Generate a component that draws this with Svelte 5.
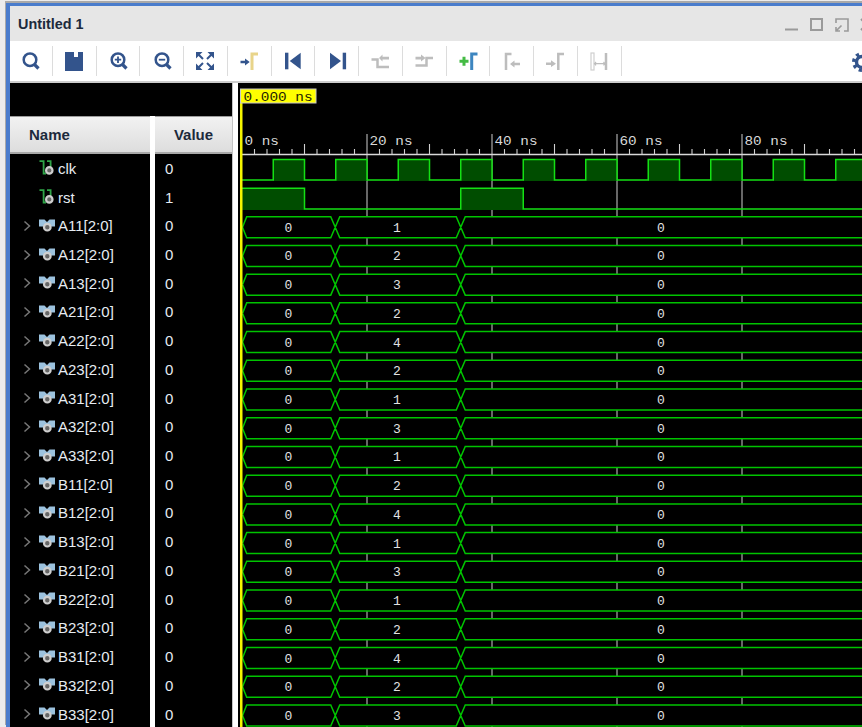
<script>
  const names = ['A11','A12','A13','A21','A22','A23','A31','A32','A33','B11','B12','B13','B21','B22','B23','B31','B32','B33'];
  const mids = [1,2,3,2,4,2,1,3,1,2,4,1,3,1,2,4,2,3];
  const signals = [
    { name: 'clk', value: 0, scalar: true },
    { name: 'rst', value: 1, scalar: true },
    ...names.map((n) => ({ name: n + '[2:0]', value: 0, scalar: false }))
  ];

  const pitch = 28.72;
  const nsX = (ns) => 242 + ns * 6.25;

  // ruler ticks, every 2ns
  const ticks = [];
  for (let ns = 2; ns <= 104; ns += 2) {
    if (ns % 20) ticks.push({ x: nsX(ns), big: ns % 10 === 0 });
  }
  const labels = [0, 20, 40, 60, 80];
  const grid = [20, 40, 60, 80];

  function scalarPath(edges, hi, lo, start) {
    // edges are toggle times in ns
    let level = start;
    let d = `M${nsX(0)},${level ? hi : lo}`;
    for (const e of edges) {
      d += `H${nsX(e)}`;
      level = !level;
      d += `V${level ? hi : lo}`;
    }
    return d + 'H880';
  }
  function highBlocks(edges, start) {
    const out = [];
    let level = start;
    let from = 0;
    for (const e of [...edges, 104]) {
      if (level) out.push([nsX(from), nsX(e)]);
      level = !level;
      from = e;
    }
    return out;
  }

  const clkEdges = [];
  for (let ns = 5; ns < 104; ns += 5) clkEdges.push(ns);
  const rstEdges = [10, 35, 45];
  const clkPath = scalarPath(clkEdges, 159.6, 180, false);
  const rstPath = scalarPath(rstEdges, 188.3, 209, true);
  const clkHigh = highBlocks(clkEdges, false);
  const rstHigh = highBlocks(rstEdges, true);

  const buses = mids.map((m, i) => ({ mid: m, y: 227.2 + i * pitch }));
  const a = nsX(15) - 0.5;
  const b = nsX(35);
  const s = 4.5;
  function busPath(c) {
    const t = c - 10.5;
    const o = c + 10.5;
    return `M242.5,${c}L${246.7},${t}H${a - s}L${a + s},${o}H${b - s}L${b + s},${t}H880M242.5,${c}L${246.7},${o}H${a - s}L${a + s},${t}H${b - s}L${b + s},${o}H880`;
  }
</script>

<div class="app">
  <div class="window">
    <div class="title">
      <span class="title-text">Untitled 1</span>
      <div class="win-btns">
        <svg width="25" height="24" viewBox="0 0 25 24"><path d="M6,17.5H19" class="wb" /></svg>
        <svg width="25" height="24" viewBox="0 0 25 24"><rect x="7" y="7" width="11" height="11" class="wb" /></svg>
        <svg width="25" height="24" viewBox="0 0 25 24"><path d="M7,11V7H19V19H15" class="wb thin" /><path d="M7,19L12.5,13.5M7,15V19H11" class="wb thin" /></svg>
        <svg width="25" height="24" viewBox="0 0 25 24"><path d="M7,7L18,18M18,7L7,18" class="wb" /></svg>
      </div>
    </div>

    <div class="toolbar">
      <div class="tool"><svg viewBox="0 0 24 24"><circle cx="12" cy="9.7" r="6.3" class="nv" /><path d="M16.5,14.5L20.5,18.5" class="nv h" /></svg></div>
      <div class="tool"><svg viewBox="0 0 24 24"><path d="M3,2H21V21H3Z" fill="#33548c" /><rect x="12" y="2" width="4" height="5" fill="#fff" /></svg></div>
      <div class="tool"><svg viewBox="0 0 24 24"><circle cx="12" cy="9.7" r="6.3" class="nv" /><path d="M16.5,14.5L20.5,18.5" class="nv h" /><path d="M8.8,9.7H15.2M12,6.5V12.9" class="nv p" /></svg></div>
      <div class="tool"><svg viewBox="0 0 24 24"><circle cx="12" cy="9.7" r="6.3" class="nv" /><path d="M16.5,14.5L20.5,18.5" class="nv h" /><path d="M8.8,9.7H15.2" class="nv p" /></svg></div>
      <div class="tool"><svg viewBox="0 0 24 24" fill="#33548c"><path d="M3,2H9.5L3,8.5Z M21,2V8.5L14.5,2Z M3,20V13.5L9.5,20Z M21,20H14.5L21,13.5Z" /><path d="M5,4L10,9M19,4L14,9M5,18L10,13M19,18L14,13" stroke="#33548c" stroke-width="2" /></svg></div>
      <div class="tool"><svg viewBox="0 0 24 24"><path d="M3.5,10.7H8V8.5L12.7,12L8,15.5V13.3H3.5Z" fill="#33548c" /><path d="M15,20V4H21" fill="none" stroke="#e8d48a" stroke-width="3" /></svg></div>
      <div class="tool"><svg viewBox="0 0 24 24" fill="#33548c"><rect x="4" y="2.7" width="3.4" height="16.6" /><path d="M8.7,11L19.7,2.7V19.3Z" /></svg></div>
      <div class="tool"><svg viewBox="0 0 24 24" fill="#33548c"><rect x="17.7" y="2.7" width="3.4" height="16.6" /><path d="M5,2.7L16,11L5,19.3Z" /></svg></div>
      <div class="tool"><svg viewBox="0 0 24 24"><path d="M3.5,9.5H9.5V17H21" class="off" /><path d="M11,8L14.5,4.5V6.8H21V9.6H14.5V11.5Z" fill="#bdbdbd" /></svg></div>
      <div class="tool"><svg viewBox="0 0 24 24"><path d="M3.5,15.5H14.5V8H21" class="off" /><path d="M3.5,6.8H9V4.5L13.5,8L9,11.5V9.5H3.5Z" fill="#bdbdbd" /></svg></div>
      <div class="tool"><svg viewBox="0 0 24 24"><path d="M3.5,11.3H12.5M8,6.8V15.8" fill="none" stroke="#44bb44" stroke-width="3" /><path d="M15.7,20V4H21.5" fill="none" stroke="#3d86c0" stroke-width="3" /></svg></div>
      <div class="tool"><svg viewBox="0 0 24 24"><path d="M6,20V4H11.5" class="off" /><path d="M10,14L14.5,10.5V12.8H20V15.2H14.5V17.5Z" fill="#bdbdbd" /></svg></div>
      <div class="tool"><svg viewBox="0 0 24 24"><path d="M3,12.5H8V10.3L13,13.7L8,17V15H3Z" fill="#bdbdbd" /><path d="M15.3,20V4H21" class="off" /></svg></div>
      <div class="tool"><svg viewBox="0 0 24 24"><rect x="4" y="3" width="3" height="17" fill="none" stroke="#cfcfcf" stroke-width="1.2" /><path d="M19,3V20" stroke="#bdbdbd" stroke-width="2.5" /><path d="M7.5,13.7H18M9,12L7.5,13.7L9,15.4M16.5,12L18,13.7L16.5,15.4" fill="none" stroke="#bdbdbd" stroke-width="1.2" /></svg></div>
      <div class="gear">
        <svg viewBox="0 0 24 24">
          <circle cx="12" cy="12" r="8.2" fill="none" stroke="#33548c" stroke-width="3.6" stroke-dasharray="3.2 3.24" />
          <circle cx="12" cy="12" r="5.5" fill="none" stroke="#33548c" stroke-width="3.4" />
        </svg>
      </div>
    </div>

    <div class="panes">
      <div class="left">
        <div class="band"></div>
        <div class="signals">
          <div class="head">Name</div>
          <div class="head center">Value</div>
          {#each signals as sig}
            <div class="cell name">
              <span class="chev">
                {#if !sig.scalar}
                  <svg width="9" height="12" viewBox="0 0 9 12"><path d="M1.5,1.5L6.5,6L1.5,10.5" fill="none" stroke="#777" stroke-width="1.5" /></svg>
                {/if}
              </span>
              {#if sig.scalar}
                <svg class="sig" width="18" height="16" viewBox="0 0 18 16">
                  <path d="M1.5,1.2H5.6V13.5H8M9,1.2H12.6V7" fill="none" stroke="#2fa548" stroke-width="1.8" />
                  <circle cx="11.3" cy="10.4" r="3.2" fill="#666" stroke="#cfcfcf" stroke-width="2.2" />
                </svg>
              {:else}
                <svg class="sig" width="18" height="16" viewBox="0 0 18 16">
                  <path d="M1,1.5H6.5L9,4L11.5,1.5H17V8.5H1Z" fill="#9cc2de" />
                  <circle cx="9.3" cy="9.2" r="3.3" fill="#666" stroke="#cfcfcf" stroke-width="2.2" />
                </svg>
              {/if}
              <span>{sig.name}</span>
            </div>
            <div class="cell val">{sig.value}</div>
          {/each}
        </div>
      </div>
      <div class="sash"></div>
      <div class="wave">
        <svg width="642" height="644" viewBox="238 83 642 644">
          <!-- grid goes under the traces, bus interiors hide it -->
          {#each grid as g}
            <path d="M{nsX(g)},134V727" stroke="#8a8a8a" stroke-width="1.5" />
          {/each}

          <path d="M241,154.4H880" stroke="#d8d8d8" stroke-width="1.5" />
          {#each ticks as t}
            <path d="M{t.x},154V{t.big ? 144 : 149}" stroke="#d0d0d0" stroke-width="1.1" />
          {/each}
          {#each labels as l}
            <text x={nsX(l) + 2.5} y="145" class="mono ruler" textLength={(l === 0 ? 4 : 5) * 8.6} lengthAdjust="spacingAndGlyphs">{l} ns</text>
          {/each}

          {#each clkHigh as h}
            <rect x={h[0]} y="159.6" width={h[1] - h[0]} height="21.4" fill="#004d00" />
          {/each}
          <path d={clkPath} class="trace" />
          {#each rstHigh as h}
            <rect x={h[0]} y="188.3" width={h[1] - h[0]} height="21.7" fill="#004d00" />
          {/each}
          <path d={rstPath} class="trace" />

          {#each buses as bus}
            <rect x="242" y={bus.y - 10.5} width="638" height="21" fill="#000" />
            <path d={busPath(bus.y)} class="bus" />
            <text x="288.5" y={bus.y + 4.5} class="mono val-t" text-anchor="middle">0</text>
            <text x="397" y={bus.y + 4.5} class="mono val-t" text-anchor="middle">{bus.mid}</text>
            <text x="661" y={bus.y + 4.5} class="mono val-t" text-anchor="middle">0</text>
          {/each}

          <rect x="240" y="100" width="2.5" height="627" fill="#f5f500" />
          <rect x="240.5" y="89" width="75.5" height="14" fill="#ffff00" stroke="#c8c8c8" />
          <text x="243.5" y="100.5" class="mono marker" textLength="69" lengthAdjust="spacingAndGlyphs">0.000 ns</text>
        </svg>
      </div>
    </div>
  </div>
</div>

<style>
  :global(body) {
    overflow: hidden;
    background: #000;
  }

  .app {
    width: 880px;
    height: 727px;
    overflow: hidden;
    background: #ececec;
    padding: 3px 0 0 6px;
    box-sizing: border-box;
  }

  .window {
    height: 100%;
    box-sizing: border-box;
    display: flex;
    flex-direction: column;
    border-left: 4px solid #4a7ccc;
    border-top: 3px solid #4a7ccc;
    box-shadow: -1px -2px 0 #a9a9a9;
    font-family: "Liberation Sans", Arial, sans-serif;
  }

  .title {
    height: 35px;
    flex: none;
    display: flex;
    align-items: center;
    justify-content: space-between;
    background: #e6e6e6;
    padding: 0 1px 0 8px;
  }

  .title-text {
    font-size: 14.4px;
    font-weight: 700;
    color: #1c2a3c;
    position: relative;
    top: 0.5px;
  }

  .win-btns {
    display: flex;
  }

  .wb {
    fill: none;
    stroke: #9a9a9a;
    stroke-width: 2;
  }

  .wb.thin {
    stroke-width: 1.6;
  }

  .toolbar {
    height: 42px;
    flex: none;
    box-sizing: border-box;
    display: flex;
    align-items: center;
    background: #fff;
    border-bottom: 2px solid #cdcdcd;
    padding: 0 2px 0 0;
  }

  .tool {
    width: 43.75px;
    height: 30px;
    flex: none;
    box-sizing: border-box;
    display: flex;
    align-items: center;
    justify-content: center;
    border-right: 1px solid #dcdcdc;
  }

  .tool:first-child {
    margin-left: -1px;
  }

  .tool svg,
  .gear svg {
    width: 24px;
    height: 24px;
    display: block;
    position: relative;
    top: 1px;
  }

  .gear {
    margin-left: auto;
    width: 28px;
  }

  .nv {
    fill: none;
    stroke: #33548c;
    stroke-width: 2.5;
  }

  .nv.h {
    stroke-width: 3.2;
  }

  .nv.p {
    stroke-width: 1.8;
  }

  .off {
    fill: none;
    stroke: #bdbdbd;
    stroke-width: 2.5;
  }

  .panes {
    flex: 1;
    display: flex;
    min-height: 0;
    background: #000;
  }

  .left {
    width: 222px;
    flex: none;
    display: flex;
    flex-direction: column;
  }

  .band {
    height: 33px;
    flex: none;
    background: #000;
  }

  .signals {
    flex: 1;
    display: grid;
    grid-template-columns: 140px 77px;
    grid-auto-rows: 28.72px;
    grid-template-rows: 38px;
    column-gap: 5px;
    align-content: start;
    background: #fff;
  }

  .head {
    box-sizing: border-box;
    display: flex;
    align-items: center;
    padding-left: 19px;
    font-size: 15px;
    font-weight: 700;
    color: #1c2a3c;
    background: linear-gradient(#f2f2f2, #dddddd);
    border-top: 1px solid #9c9c9c;
    border-bottom: 2px solid #a8a8a8;
  }

  .head.center {
    justify-content: center;
    padding-left: 0;
  }

  .cell {
    background: #000;
    color: #e6ecf2;
    font-size: 15px;
    display: flex;
    align-items: center;
  }

  .name {
    padding-left: 13px;
  }

  .chev {
    width: 15px;
    flex: none;
    display: flex;
    justify-content: flex-start;
  }

  .chev svg {
    display: block;
  }

  .sig {
    flex: none;
    margin-right: 2px;
  }

  .val {
    padding-left: 10px;
  }

  .sash {
    width: 6px;
    flex: none;
    box-sizing: border-box;
    background: #fff;
    border-left: 1px solid #c4c4c4;
  }

  .wave {
    flex: 1;
    overflow: hidden;
    min-width: 0;
  }

  .wave svg {
    display: block;
  }

  .mono {
    font-family: "Liberation Mono", "Courier New", monospace;
  }

  .ruler {
    font-size: 12px;
    fill: #d8d8d8;
  }

  .val-t {
    font-size: 13px;
    fill: #e2e2e2;
  }

  .marker {
    font-size: 12px;
    fill: #222200;
  }

  .trace {
    fill: none;
    stroke: #14e014;
    stroke-width: 1.5;
  }

  .bus {
    fill: none;
    stroke: #00c400;
    stroke-width: 1.5;
  }
</style>
